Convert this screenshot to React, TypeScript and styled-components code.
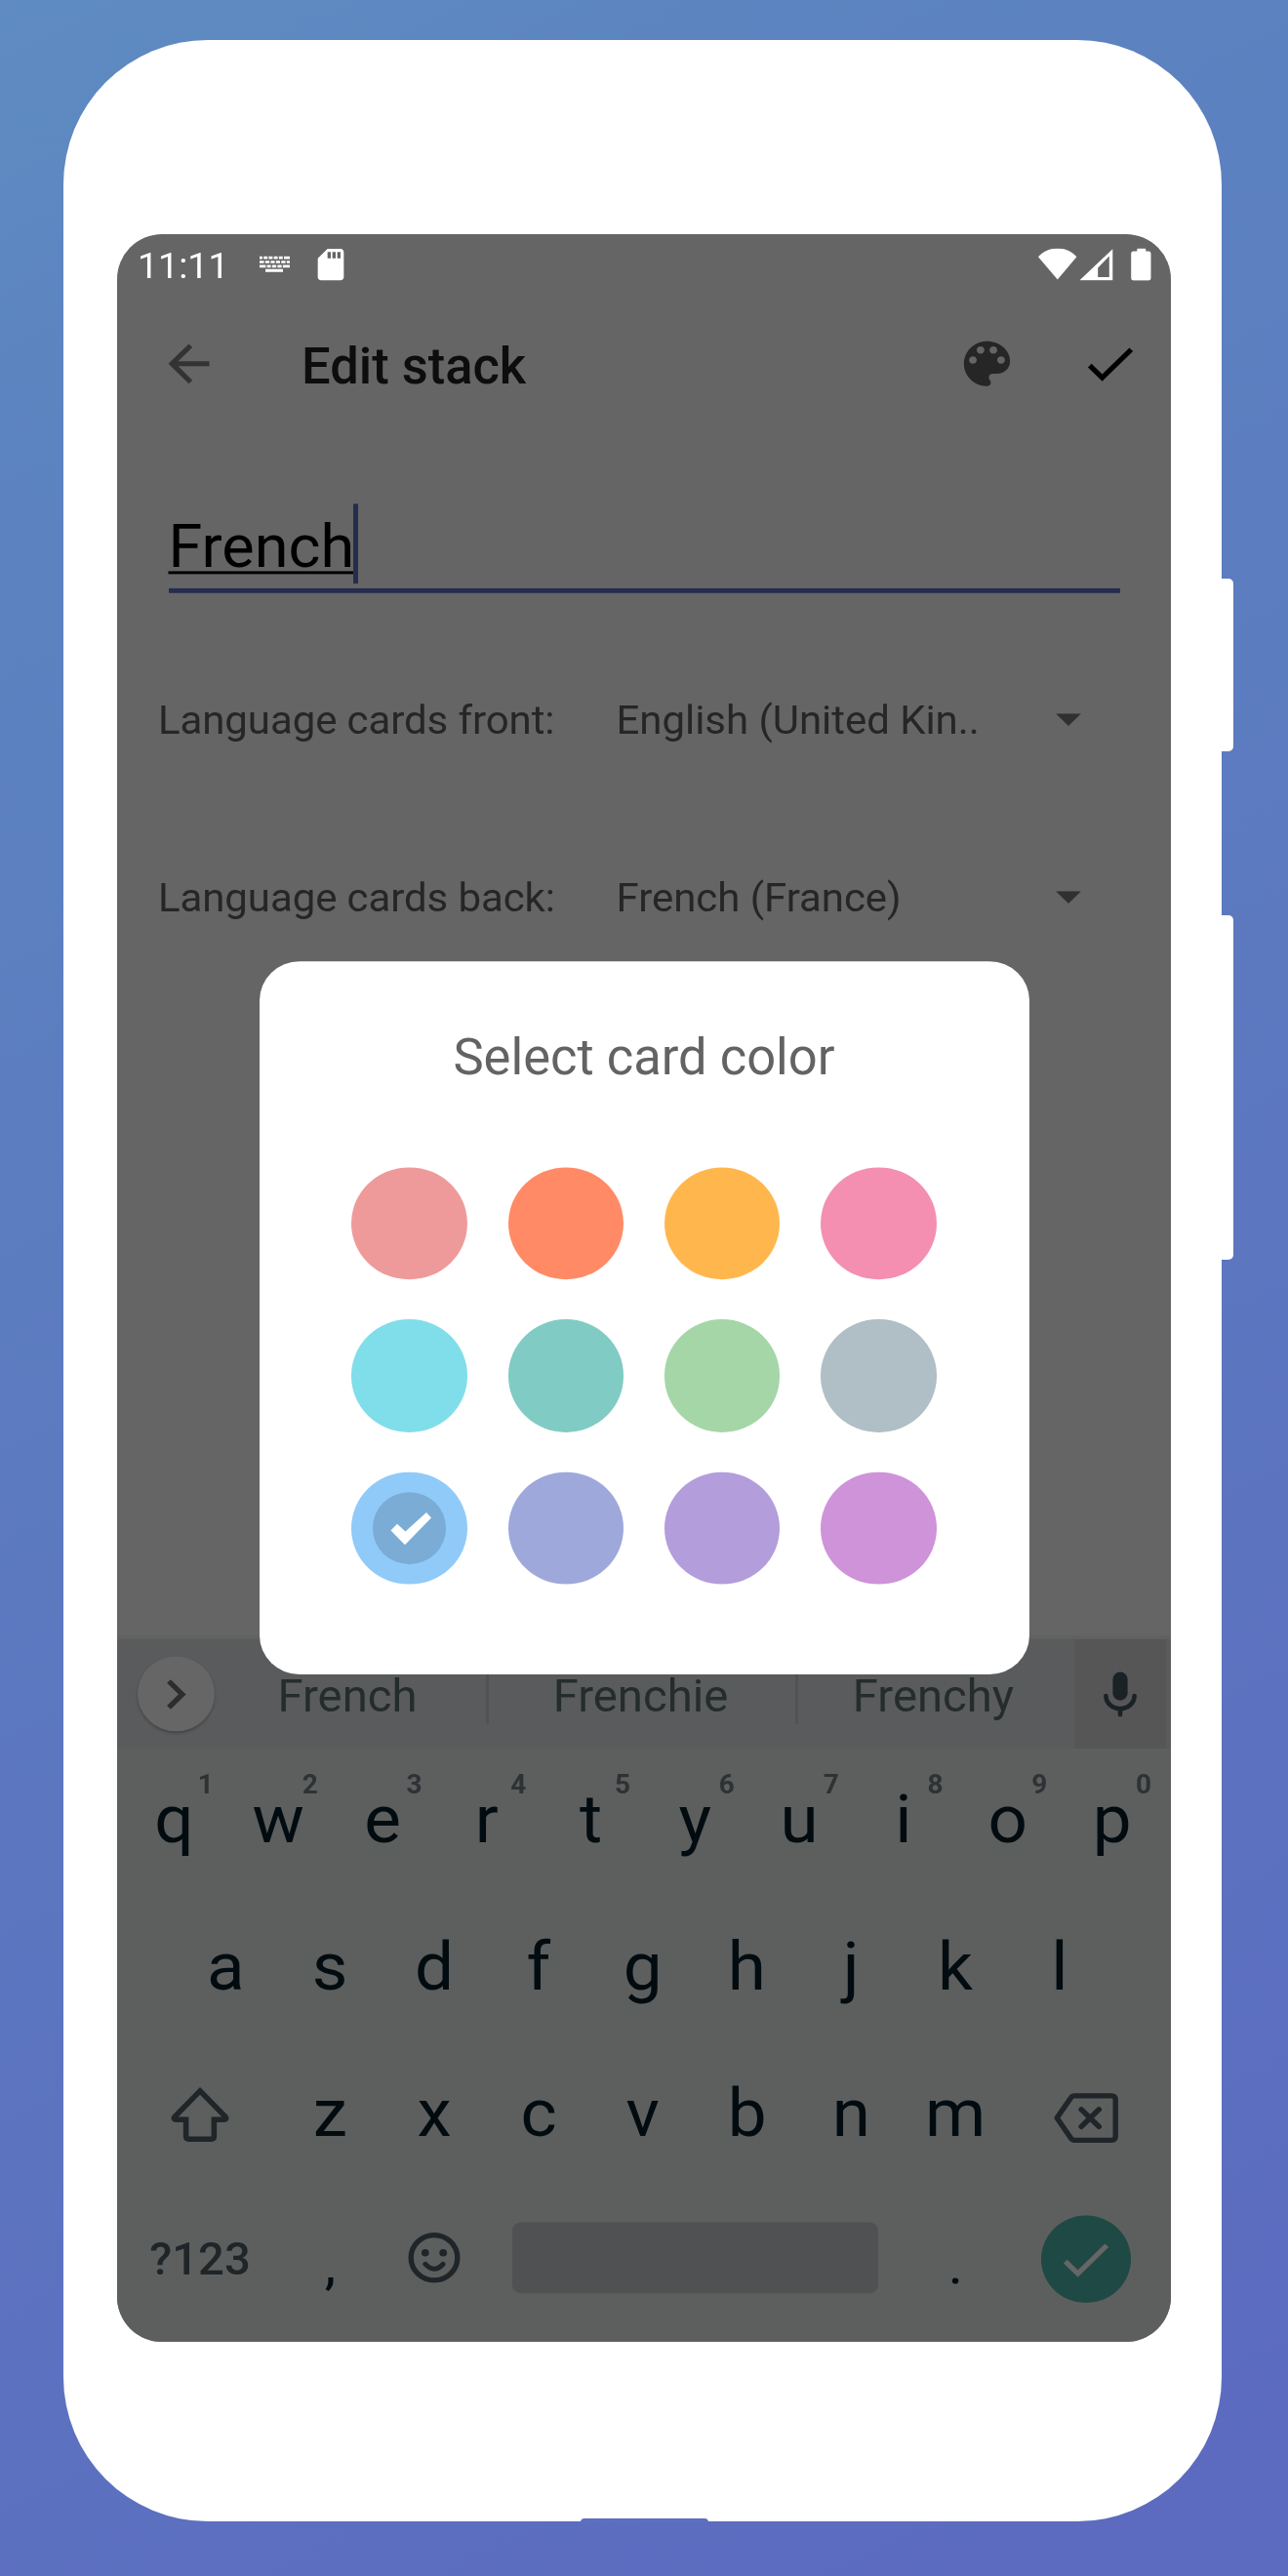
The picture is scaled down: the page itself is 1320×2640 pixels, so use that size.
import React from "react";
import styled, { createGlobalStyle } from "styled-components";

const GlobalStyle = createGlobalStyle`
  *, *::before, *::after { box-sizing: border-box; }
  body { margin: 0; font-family: Roboto, "Liberation Sans", sans-serif; }
  svg { display: block; flex: none; }
`;

const Backdrop = styled.main`
  width: 1320px;
  height: 2640px;
  padding: 41px 68px 0 65px;
  overflow: hidden;
  background: linear-gradient(153deg, #5e8bc1 0%, #5c84c0 14%, #5c6bc0 95%);
`;

const Phone = styled.div`
  position: relative;
  width: 1187px;
  height: 2542.5px;
  padding: 199px 52px 0 55px;
  border-radius: 148px;
  background: #fff;
`;

const SideButton = styled.span<{ $top: number; $height: number }>`
  position: absolute;
  left: 100%;
  top: ${(p) => p.$top}px;
  width: 12px;
  height: ${(p) => p.$height}px;
  border-radius: 0 5px 5px 0;
  background: #fff;
`;

const ChargePort = styled.span`
  position: absolute;
  left: 530px;
  bottom: -1px;
  width: 131px;
  height: 4px;
  border-radius: 7px 7px 0 0;
  background: #5c6fc0;
`;

const Display = styled.div`
  width: 1080px;
  height: 2160px;
  overflow: hidden;
  border-radius: 46px;
  background: #656565;
`;

/* The 1080x2220 device screen is fitted to the 1080x2160 display. */
const Screen = styled.div`
  position: relative;
  display: flex;
  flex-direction: column;
  width: 1080px;
  height: 2220px;
  transform: scaleY(0.97297);
  transform-origin: top left;
`;

const StatusBar = styled.header`
  display: flex;
  align-items: center;
  justify-content: space-between;
  height: 63px;
  padding: 0 20px 0 21px;
  color: #fff;
`;

const StatusGroup = styled.div`
  display: flex;
  align-items: center;
`;

const Clock = styled.span`
  width: 125px;
  padding-top: 3px;
  font-size: 37.6px;
  line-height: 59px;
  white-space: nowrap;
`;

const Toolbar = styled.div`
  display: flex;
  align-items: center;
  height: 147px;
  padding: 0 31.5px 0 42px;
`;

const ToolbarTitle = styled.h1`
  flex: 1;
  margin: 0;
  padding: 5px 0 0 84px;
  color: #0d0d0d;
  font-size: 52.5px;
  font-weight: 500;
  line-height: 62px;
`;

const ToolbarActions = styled.div`
  display: flex;
  gap: 63px;
`;

const AppBody = styled.section`
  display: flex;
  flex: 1;
  flex-direction: column;
  padding: 74px 52.5px 0 42px;
`;

const NameField = styled.div`
  display: flex;
  align-items: flex-start;
  height: 94px;
  margin-left: 10.5px;
  border-bottom: 5.5px solid #252c4f;
`;

const NameText = styled.span`
  color: #000;
  font-size: 63px;
  line-height: 90px;
  text-decoration: underline;
  text-decoration-thickness: 3.2px;
  text-decoration-skip-ink: none;
  text-underline-offset: 4.6px;
`;

const Caret = styled.span`
  width: 5.5px;
  height: 84px;
  margin-left: -1.5px;
  background: #252c4f;
`;

const LanguageRows = styled.div`
  display: flex;
  flex-direction: column;
  padding-top: 40px;
`;

const LanguageRow = styled.div`
  display: flex;
  align-items: center;
  height: 187px;
  color: #262626;
  font-size: 42px;
  line-height: 50px;
  white-space: nowrap;
`;

const LanguageLabel = styled.span`
  width: 469.5px;
  letter-spacing: -0.1px;
`;

const LanguageValue = styled.span`
  width: 450.5px;
  letter-spacing: -0.05px;
`;

const Keyboard = styled.section`
  height: 740px;
  background: #5d5f5e;
`;

const SuggestionStrip = styled.div`
  display: flex;
  align-items: center;
  height: 115px;
  padding-right: 5px;
  background: #5a5b5d;
  box-shadow: 0 -2px 4px rgba(0, 0, 0, 0.06);
`;

const ExpandButton = styled.span`
  display: flex;
  align-items: center;
  justify-content: center;
  width: 79px;
  height: 79px;
  margin: 0 -3px 0 21px;
  border-radius: 50%;
  background: #666;
  box-shadow: 0 2px 3px rgba(0, 0, 0, 0.25);
`;

const Suggestion = styled.span<{ $width: number }>`
  width: ${(p) => p.$width}px;
  padding: 4px 3px 0 0;
  color: #252c2c;
  font-size: 47.25px;
  line-height: 56px;
  text-align: center;
`;

const StripDivider = styled.span`
  width: 3px;
  height: 63px;
  background: #505253;
`;

const MicButton = styled.span`
  display: flex;
  align-items: center;
  justify-content: center;
  width: 94.5px;
  height: 115px;
  margin-left: auto;
  background: #565656;
`;

const KeyRow = styled.div<{ $inset?: number }>`
  display: flex;
  height: 154.5px;
  padding: 0 ${(p) => p.$inset ?? 5}px;
`;

const Key = styled.span<{ $width?: number; $kind?: "label" | "mark" }>`
  position: relative;
  display: flex;
  flex: none;
  align-items: center;
  justify-content: center;
  width: ${(p) => p.$width ?? 106.8}px;
  padding: ${(p) => (p.$kind === "mark" ? "4px 0 0" : "0 0 5px")};
  color: ${(p) => (p.$kind === "label" ? "#1f2528" : "#020c10")};
  font-size: ${(p) =>
    p.$kind === "label" ? 47.25 : p.$kind === "mark" ? 58 : 71}px;
  font-weight: ${(p) => (p.$kind === "label" ? 500 : 400)};
`;

const KeyHint = styled.span`
  position: absolute;
  top: 23.7px;
  left: calc(50% + 20px);
  width: 25px;
  color: #2f3235;
  font-size: 28px;
  font-weight: 700;
  line-height: 28px;
  text-align: center;
`;

const SpaceBar = styled.span`
  width: 375px;
  height: 75.5px;
  margin-bottom: 4px;
  border-radius: 9px;
  background: #505153;
`;

const EnterButton = styled.span`
  display: flex;
  align-items: center;
  justify-content: center;
  width: 92px;
  height: 92px;
  border-radius: 50%;
  background: #1f4944;
`;

const Dialog = styled.div`
  position: absolute;
  top: 765.7px;
  left: 145.5px;
  display: flex;
  flex-direction: column;
  align-items: center;
  width: 789px;
  height: 751px;
  padding-top: 71px;
  border-radius: 41px;
  background: #fff;
`;

const DialogTitle = styled.h2`
  margin: 0 0 86.5px;
  color: #636363;
  font-size: 52.5px;
  font-weight: 400;
  line-height: 60px;
`;

const Swatches = styled.div`
  display: grid;
  grid-template-columns: repeat(4, 118.3px);
  gap: 42px;
`;

const Swatch = styled.span<{ $color: string }>`
  display: flex;
  align-items: center;
  justify-content: center;
  height: 118.3px;
  border-radius: 50%;
  background: ${(p) => p.$color};
`;

const SelectedMark = styled.span`
  display: flex;
  align-items: center;
  justify-content: center;
  width: 75.6px;
  height: 75.6px;
  padding: 2px 0 0 2px;
  border-radius: 50%;
  background: #7bacd5;
`;

const SdCard = styled.svg`
  margin-left: 22px;
`;

const CHECK = "M9 16.17L4.83 12l-1.42 1.41L9 19 21 7l-1.41-1.41z";

type GlyphProps = { d: string; color: string; size?: number };

const Glyph = ({ d, color, size = 63 }: GlyphProps) => (
  <svg width={size} height={size} viewBox="0 0 24 24" fill={color}>
    <path d={d} />
  </svg>
);

const KeyboardStatusIcon = () => (
  <svg width="31" height="17" viewBox="0 0 31 17" stroke="#fff" fill="none">
    <path d="M0 1.7h31" strokeWidth="3.2" strokeDasharray="3 1.2 4 1.2 4 1.2 4 1.2 4 1.2 6" />
    <path d="M0 6.3h31" strokeWidth="2.8" strokeDasharray="4.6 1.2 4.4 1.2 4.2 1.2 4.2 1.2 4.4 1.2 4" />
    <path d="M0 10.8h31" strokeWidth="3" strokeDasharray="6.4 1.2 4 1.2 4.4 1.2 4.2 1.2 8" />
    <path d="M6 15.3h18" strokeWidth="3" />
  </svg>
);

const ConnectionIcons = () => (
  <svg width="116" height="34" viewBox="0 0 116 34" fill="#fff">
    <path d="M0 9C5 3 12 0 19.8 0s14.6 3 19.6 9L19.8 32.8z" />
    <path fillRule="evenodd" d="M43 33.6V33L76.3 .6v33zM61.2 20.5v9.6h11.6V8.2z" />
    <path
      d="M97.5 3V1.2q0-1.2 1.2-1.2h6.6q1.2 0 1.2 1.2V3h3q2.2 0 2.2 2.2v26.4q0 2.2-2.2 2.2H93.6q-2.2 0-2.2-2.2V5.2Q91.4 3 93.6 3z"
      transform="translate(3.8 0)"
    />
  </svg>
);

const ShiftIcon = () => (
  <svg width="60" height="62" viewBox="0 -1.5 60 62" fill="none" stroke="#1f2528" strokeWidth="5.6">
    <path d="M30 6.2L56 33.4q1.8 3.1-1.6 3.1H44.4v17.4q0 3-3 3H18.6q-3 0-3-3V36.5H5.6q-3.4 0-1.6-3.1z" />
  </svg>
);

const BackspaceIcon = () => (
  <svg width="66" height="64" viewBox="0 0 66 64" fill="none" stroke="#1f2528">
    <path
      d="M20.6 13.8h38.6q4 0 4 4v38.8q0 4-4 4h-38.6q-1.8 0-2.8-1.7L3.2 37.2 17.8 15.5q1-1.7 2.8-1.7z"
      strokeWidth="5.4"
      strokeLinejoin="round"
    />
    <path d="M28.2 28.2l18 18M46.2 28.2l-18 18" strokeWidth="5.6" strokeLinecap="round" />
  </svg>
);

const EmojiIcon = () => (
  <svg width="54" height="58" viewBox="0 0 54 58" fill="none" stroke="#1f2528">
    <circle cx="27" cy="27.4" r="23.8" strokeWidth="5.4" />
    <path d="M18 34.2q8.8 9.8 18 0" strokeWidth="5.2" strokeLinecap="round" />
    <circle cx="17.8" cy="22.2" r="3.9" fill="#1f2528" stroke="none" />
    <circle cx="36.2" cy="22.2" r="3.9" fill="#1f2528" stroke="none" />
  </svg>
);

const MicIcon = () => (
  <svg width="34" height="48" viewBox="0 0 34 48" fill="none" stroke="#1b2225">
    <rect x="9.4" y="0.5" width="15.2" height="30" rx="7.6" fill="#1b2225" stroke="none" />
    <path d="M2.4 25.5a14.6 13.6 0 0 0 29.2 0M17 39v6.5" strokeWidth="4.6" strokeLinecap="round" />
  </svg>
);

const numberRow = "qwertyuiop".split("");
const homeRow = "asdfghjkl".split("");
const lowerRow = "zxcvbnm".split("");

const cardColors = [
  "#ef9a9a", "#ff8a65", "#ffb74d", "#f48fb1",
  "#80deea", "#80cbc4", "#a5d6a7", "#b0bec5",
  "#90caf9", "#9fa8da", "#b39ddb", "#ce93d8",
];
const selectedColor = "#90caf9";

const languages = [
  { label: "Language cards front:", value: "English (United Kin.." },
  { label: "Language cards back:", value: "French (France)" },
];

export default function App() {
  return (
    <>
      <GlobalStyle />
      <Backdrop>
        <Phone>
          <SideButton $top={552} $height={177} />
          <SideButton $top={897} $height={353} />
          <ChargePort />
          <Display>
            <Screen>
              <StatusBar>
                <StatusGroup>
                  <Clock>11:11</Clock>
                  <KeyboardStatusIcon />
                  <SdCard width="40" height="40" viewBox="0 0 24 24" fill="#fff">
                    <path d="M18 2h-8L4.02 8 4 20c0 1.1.9 2 2 2h12c1.1 0 2-.9 2-2V4c0-1.1-.9-2-2-2zm-6 6h-2V4h2v4zm3 0h-2V4h2v4zm3 0h-2V4h2v4z" />
                  </SdCard>
                </StatusGroup>
                <ConnectionIcons />
              </StatusBar>
              <Toolbar>
                <Glyph color="#333" d="M20 11H7.83l5.59-5.59L12 4l-8 8 8 8 1.41-1.41L7.83 13H20v-2z" />
                <ToolbarTitle>Edit stack</ToolbarTitle>
                <ToolbarActions>
                  <Glyph
                    color="#262626"
                    d="M12 3c-4.97 0-9 4.03-9 9s4.03 9 9 9c.83 0 1.5-.67 1.5-1.5 0-.39-.15-.74-.39-1.01-.23-.26-.38-.61-.38-.99 0-.83.67-1.5 1.5-1.5H16c2.76 0 5-2.24 5-5 0-4.42-4.03-8-9-8zm-5.5 9c-.83 0-1.5-.67-1.5-1.5S5.67 9 6.5 9 8 9.67 8 10.5 7.33 12 6.5 12zm3-4C8.67 8 8 7.33 8 6.5S8.67 5 9.5 5s1.5.67 1.5 1.5S10.33 8 9.5 8zm5 0c-.83 0-1.5-.67-1.5-1.5S13.67 5 14.5 5s1.5.67 1.5 1.5S15.33 8 14.5 8zm3 4c-.83 0-1.5-.67-1.5-1.5S16.67 9 17.5 9s1.5.67 1.5 1.5-.67 1.5-1.5 1.5z"
                  />
                  <Glyph color="#000" d={CHECK} />
                </ToolbarActions>
              </Toolbar>
              <AppBody>
                <NameField>
                  <NameText>French</NameText>
                  <Caret />
                </NameField>
                <LanguageRows>
                  {languages.map((row) => (
                    <LanguageRow key={row.label}>
                      <LanguageLabel>{row.label}</LanguageLabel>
                      <LanguageValue>{row.value}</LanguageValue>
                      <svg width="26" height="13" viewBox="0 0 10 5" fill="#303030">
                        <path d="M0 0l5 5 5-5z" />
                      </svg>
                    </LanguageRow>
                  ))}
                </LanguageRows>
              </AppBody>
              <Keyboard>
                <SuggestionStrip>
                  <ExpandButton>
                    <svg width="20" height="32" viewBox="0 0 20 32" fill="none" stroke="#2d2d2d" strokeWidth="5.4">
                      <path d="M2 2.2L15.8 16 2 29.8" />
                    </svg>
                  </ExpandButton>
                  <Suggestion $width={281}>French</Suggestion>
                  <StripDivider />
                  <Suggestion $width={314}>Frenchie</Suggestion>
                  <StripDivider />
                  <Suggestion $width={280}>Frenchy</Suggestion>
                  <MicButton>
                    <MicIcon />
                  </MicButton>
                </SuggestionStrip>
                <KeyRow>
                  {numberRow.map((letter, i) => (
                    <Key key={letter}>
                      {letter}
                      <KeyHint>{(i + 1) % 10}</KeyHint>
                    </Key>
                  ))}
                </KeyRow>
                <KeyRow $inset={58}>
                  {homeRow.map((letter) => (
                    <Key key={letter}>{letter}</Key>
                  ))}
                </KeyRow>
                <KeyRow>
                  <Key $width={160}>
                    <ShiftIcon />
                  </Key>
                  {lowerRow.map((letter) => (
                    <Key key={letter}>{letter}</Key>
                  ))}
                  <Key $width={160}>
                    <BackspaceIcon />
                  </Key>
                </KeyRow>
                <KeyRow>
                  <Key $width={160} $kind="label">
                    ?123
                  </Key>
                  <Key $kind="mark">,</Key>
                  <Key>
                    <EmojiIcon />
                  </Key>
                  <Key $width={427.4}>
                    <SpaceBar />
                  </Key>
                  <Key $kind="mark">.</Key>
                  <Key $width={160}>
                    <EnterButton>
                      <Glyph d={CHECK} color="#666" />
                    </EnterButton>
                  </Key>
                </KeyRow>
              </Keyboard>
              <Dialog>
                <DialogTitle>Select card color</DialogTitle>
                <Swatches>
                  {cardColors.map((color) => (
                    <Swatch key={color} $color={color}>
                      {color === selectedColor && (
                        <SelectedMark>
                          <svg width="44" height="36" viewBox="0 0 44 36" fill="#fff">
                            <path d="M1.5 19.5L8 12.5 16.5 20.5 38 0.5 43 6 16 34.5z" />
                          </svg>
                        </SelectedMark>
                      )}
                    </Swatch>
                  ))}
                </Swatches>
              </Dialog>
            </Screen>
          </Display>
        </Phone>
      </Backdrop>
    </>
  );
}
